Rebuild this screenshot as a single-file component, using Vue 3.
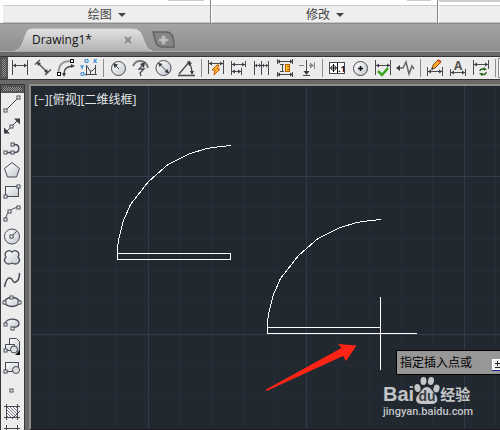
<script setup>
const sq = (x, y) => `<rect x="${x - 1.5}" y="${y - 1.5}" width="3" height="3" fill="#fff"/>`
const dot = 'fill="#3c3c44" stroke="none"'

const dimensionGroups = [
  [
    { name: 'Linear', art: `<path d="M4.500 3v15M19.500 3v15M5 8.500h14"/><path ${dot} d="M5 8.500l3-2v4zM19 8.500l-3-2v4z"/>` },
    { name: 'Aligned', art: `<path stroke-width="1.300" d="M4 7.500l5-4.500M14 18l6-5.500M7 6l9 9"/><path ${dot} d="M6 5l4 1-3 3zM17 16l-4-1 3-3z"/>` },
    { name: 'Arc length', art: `<path stroke="#999" stroke-width="2" d="M4.500 16c0-8 4-12 12-12"/><path stroke-width="1.500" d="M10 17c0-5 2-7 8-8"/><path ${dot} d="M8 16h4l-2 4zM17 7v4l4-2z"/><rect x="3.500" y="15.500" width="3" height="3" fill="#fff" stroke="#111"/><rect x="16.500" y="2.500" width="3" height="3" fill="#fff" stroke="#111"/>` },
    { name: 'Ordinate', art: `<path d="M9.500 8v10.500M8 17.500h12M10 9l3 5h2l3-3M13.500 14v4M18.500 8v10"/><g fill="#0878d0" stroke="none" font-size="6" font-weight="700"><text x="7" y="6">O</text><text x="16" y="6">X</text><text x="3" y="12">Y</text><text x="3" y="19">O</text></g>` }
  ],
  [
    { name: 'Radius', art: `<circle cx="12.500" cy="11.500" r="7" fill="url(#steel)"/><path d="M8 7l5 5"/><path ${dot} d="M7 6l5 1.500L8.500 11z"/>` },
    { name: 'Jogged radius', art: `<path stroke="#777" stroke-width="2" d="M4 9c3-7 13-7 15 2"/><path stroke-width="1.300" d="M14 8l-4 4 5 0-4 4 1 3"/><path ${dot} d="M16 5l-1 6-4-4z"/>` },
    { name: 'Diameter', art: `<circle cx="11.500" cy="11" r="7.500" fill="url(#steel)"/><path d="M7 6.500l9 9"/><path ${dot} d="M6 5.500l4.500 1.500L7.500 10zM17 16.500l-4.500-1.500 3-3z"/>` },
    { name: 'Angular', art: `<path stroke-width="1.300" d="M3 18.500h17M4 17L15 4M14 6c3 4 3 7 3 11"/><path ${dot} d="M12 4l5 2-3 3zM17 18l-2-4h4z"/>` }
  ],
  [
    { name: 'Quick', art: `<path d="M4.500 3v14M19.500 3v14M5 6.500h14"/><path ${dot} d="M5 6.500l3-2v4zM19 6.500l-3-2v4z"/><path stroke="#d05b00" fill="#ffb62e" d="M13 8l-5 5h3l-1 5 6-6h-3l2-4z"/>` },
    { name: 'Baseline', art: `<path d="M4.500 4v14M18.500 4v6M14.500 11v7M5 7.500h13M5 14.500h9"/><path ${dot} d="M5 7.500l3-2v4zM18 7.500l-3-2v4zM5 14.500l3-2v4zM14 14.500l-3-2v4z"/>` },
    { name: 'Continue', art: `<path d="M4.500 4v14M11.500 4v14M18.500 4v14M5 8.500h13"/><path ${dot} d="M5 8.500l2-2v4zM11 8.500l-2-2v4zM12 8.500l2-2v4zM18 8.500l-2-2v4z"/>` },
    { name: 'Dimension space', art: `<path d="M4.500 2v5M19.500 2v5M4 4.500h15M4.500 15v5M19.500 15v5M4 17.500h15M7 7.500h4M9.500 8v7M7 14.500h4"/><path ${dot} d="M4 4.500l3-2v4zM20 4.500l-3-2v4zM4 17.500l3-2v4zM20 17.500l-3-2v4z"/><rect x="12.500" y="7.500" width="4" height="7" fill="#ffc928" stroke="#b45b00"/><path stroke="#b45b00" d="M14 9.500h2M14 12.500h2"/>` },
    { name: 'Dimension break', art: `<path stroke="#888" d="M3 8.500h5M13 8.500h5M18.500 5v7"/><path fill="#888" stroke="none" d="M18 8.500l-4-3v6z"/><path d="M10.500 3v13M7 18.500h7"/><path ${dot} d="M10.500 18l-3-4h6z"/>` }
  ],
  [
    { name: 'Tolerance', art: `<rect x="4.500" y="5.500" width="15" height="11" fill="#fff"/><circle cx="8.500" cy="11" r="2.500"/><path stroke="#111" d="M5 11h7M8.500 7v8M12.500 6v10"/><text x="13" y="15" font-size="9" font-weight="700" fill="#111" stroke="none">.1</text>` },
    { name: 'Center mark', art: `<circle cx="12.500" cy="11.500" r="7" fill="url(#steel)"/><path stroke="#111" stroke-width="1.500" d="M10 11.500h5M12.500 9v5"/>` },
    { name: 'Inspection', art: `<path d="M4.500 3v15M19.500 3v15M5 8.500h14"/><path ${dot} d="M5 8.500l3-2v4zM19 8.500l-3-2v4z"/><path stroke="#38a51c" stroke-width="2.500" d="M7 14l4 4 6-7"/>` },
    { name: 'Jogged linear', art: `<path stroke="#666" stroke-width="1.500" d="M4 11h5l3-6 3 12 3-8 2 3"/><path ${dot} d="M2 11l4-3v6z"/>` }
  ],
  [
    { name: 'Edit', art: `<path d="M4.500 10v9M19.500 10v9M5 14.500h14"/><path ${dot} d="M5 14.500l3-2v4zM19 14.500l-3-2v4z"/><path fill="#f9a72d" stroke="#8b4a12" d="M9 12l1-4 5-5 3 2-6 6z"/><path stroke="#d83c20" stroke-width="2" d="M15 3l3 2"/><path ${dot} d="M8 13l1-3 2 2z"/>` },
    { name: 'Text edit', art: `<path d="M4.500 12v7M19.500 12v7M5 15.500h14"/><path ${dot} d="M5 15.500l3-2v4zM19 15.500l-3-2v4z"/><text x="8" y="13" font-size="12" font-weight="700" fill="#555" stroke="none">A</text>` },
    { name: 'Update', art: `<path d="M4.500 3v15M19.500 3v9M5 7.500h14"/><path ${dot} d="M5 7.500l3-2v4zM19 7.500l-3-2v4z"/><path stroke="#286818" stroke-width="1.500" d="M11 14c0-2 3-3 5-1M17 15c0 3-3 3-5 2"/><path fill="#286818" stroke="none" d="M15 10l3 3h-4zM13 19l-3-3h4z"/>` }
  ]
]

const drawTools = [
  { name: 'Line', art: `<path d="M4.500 17.500l13-13"/>${sq(4.5, 17.5)}${sq(17.5, 4.5)}` },
  { name: 'Construction line', art: `<path d="M5 17L17 5"/><path ${dot} d="M3 18.500v-6l6 6zM19 3.500v6l-6-6z"/>${sq(10.5, 11.5)}` },
  { name: 'Polyline', art: `<path stroke-width="1.500" d="M4 15.500h10c5 0 5-8 0-8h-3"/>${sq(4.5, 15.5)}${sq(11.5, 15.5)}${sq(11.5, 7.5)}` },
  { name: 'Polygon', art: `<path fill="url(#steel)" d="M11 3.500l7.500 6-3 8.500h-9l-3-8.500z"/>` },
  { name: 'Rectangle', art: `<rect x="4.500" y="5.500" width="13" height="10" fill="url(#steel)"/>${sq(4.5, 15.5)}${sq(17.5, 5.5)}` },
  { name: 'Arc', art: `<path d="M4.500 16.500c1-7 6-12 13-12"/>${sq(4.5, 16.5)}${sq(8.5, 8.5)}${sq(17.5, 4.5)}` },
  { name: 'Circle', art: `<circle cx="11" cy="11.500" r="7.500" fill="url(#steel)"/><path d="M10.500 11.500l5-5"/>${sq(10.5, 11.5)}` },
  { name: 'Revision cloud', art: `<path fill="url(#steel)" stroke-width="1.300" d="M11 5c3-3 9 0 6 5 4 4-1 9-6 6-5 3-10-2-6-6-3-5 3-8 6-5z"/>` },
  { name: 'Spline', art: `<path stroke-width="1.500" d="M3.500 18c1-5 2-9 5-9 4 0 3 6 6 4 3-1 4-5 4-9"/>` },
  { name: 'Ellipse', art: `<ellipse cx="11" cy="11" rx="7.500" ry="4.500" fill="url(#steel)" stroke-width="1.300"/>${sq(3.5, 11.5)}${sq(18.5, 11.5)}${sq(10.5, 6.5)}` },
  { name: 'Ellipse arc', art: `<path fill="url(#steel)" stroke-width="1.300" d="M4 11.500c0-7 14-7 14-1 0 3-4 4-7 4"/>${sq(4.5, 11.5)}${sq(11.5, 15.5)}` },
  { name: 'Insert block', art: `<path fill="url(#steel)" d="M8.500 9V3.500h7l3 3V16h-5"/><path fill="url(#steel)" d="M4.500 9.500h9v6h-9z"/><circle cx="13" cy="14.500" r="3.500" fill="#ddd"/>${sq(4.5, 15.5)}<path fill="#111" stroke="none" d="M19 15v5h-5z"/>` },
  { name: 'Make block', art: `<rect x="4.500" y="5.500" width="13" height="9" fill="url(#steel)"/><circle cx="15" cy="13" r="3.500" fill="#ddd"/>${sq(4.5, 14.5)}` },
  { name: 'Point', art: sq(10.5, 11.5) },
  { name: 'Hatch', art: `<rect x="6" y="6" width="10" height="11" fill="url(#stripes)" stroke="none"/><path d="M3 5.500h16M3 16.500h16M5.500 3v16M16.500 3v16"/><path d="M11 18l8-8"/>` },
  { name: 'Gradient', art: `<path d="M3 5.500h16M5.500 2v16M16.500 2v16"/>` }
]

const panels = [
  { title: '绘图', cls: 'draw' },
  { title: '修改', cls: 'modify' },
  { title: '', cls: 'rest' }
]

const pitch = 31.6
const lines = (first, majorAt, count) =>
  Array.from({ length: count }, (_, i) => ({ at: Math.round(first + i * pitch), major: i % 5 === majorAt }))
const columns = lines(22, 3, 60)
const rows = lines(26.5, 2, 40)
</script>

<template>
  <div class="app">
    <svg class="defs" aria-hidden="true">
      <defs>
        <linearGradient id="steel" x1="0" y1="0" x2="1" y2="1">
          <stop offset="0" stop-color="#ffffff" />
          <stop offset="1" stop-color="#c4c9cf" />
        </linearGradient>
        <pattern id="stripes" width="3" height="3" patternUnits="userSpaceOnUse">
          <rect width="3" height="3" fill="#f4f4f4" />
          <path d="M0 0l3 3M-1 2l2 2M2 -1l2 2" stroke="#777c86" />
        </pattern>
      </defs>
    </svg>

    <header class="ribbon">
      <section v-for="p in panels" :key="p.cls" class="panel" :class="p.cls">
        <div class="panel-body"><i class="stub"></i></div>
        <button class="panel-title" type="button" :aria-label="p.title || 'Panel'">
          <span>{{ p.title }}</span>
          <i v-if="p.title" class="caret"></i>
        </button>
      </section>
    </header>

    <nav class="tabs">
      <div class="tab">
        <svg class="tab-shape" viewBox="0 0 137 24" preserveAspectRatio="none" aria-hidden="true">
          <defs>
            <linearGradient id="tabfill" x1="0" y1="0" x2="0" y2="1">
              <stop offset="0" stop-color="#e2e2e2" />
              <stop offset="1" stop-color="#b3b3b3" />
            </linearGradient>
          </defs>
          <path d="M0 24C6 22 7 18 9 12C12 3 12 1 18 1H117C125 1 126 5 128 11C131 19 131 22 137 24Z" fill="url(#tabfill)" />
          <path d="M0 24C6 22 7 18 9 12C12 3 12 1 18 1H117C125 1 126 5 128 11C131 19 131 22 137 24" fill="none" stroke="#d4d4d4" />
        </svg>
        <a class="tab-name" href="#">Drawing1*</a>
        <button class="close" type="button" aria-label="Close">
          <svg width="8" height="8" viewBox="0 0 8 8"><path d="M1 1l6 6M7 1l-6 6" stroke="#8b8b8b" stroke-width="2" /></svg>
        </button>
      </div>
      <button class="new-tab" type="button" aria-label="New drawing">
        <svg width="24" height="18" viewBox="0 0 24 18">
          <path d="M1 1h14c6 1 7 6 7 15H9C3 15 3 7 1 1z" fill="#858585" stroke="#626262" stroke-width="1.500" />
          <path d="M10 5h3v3h3v2h-3v3h-3v-3H7V8h3z" fill="#c4c4c4" stroke="#ababab" />
        </svg>
      </button>
    </nav>

    <div class="toolbar-row">
      <div class="toolbar">
        <i class="grip"></i>
        <div v-for="(group, g) in dimensionGroups" :key="g" class="group">
          <button v-for="t in group" :key="t.name" class="tool" type="button" :aria-label="t.name">
            <svg width="23" height="22" viewBox="0 0 23 22" fill="none" stroke="#4a4a50" v-html="t.art"></svg>
          </button>
          <i class="sep"></i>
        </div>
        <i class="style-box"></i>
      </div>
    </div>

    <main class="work">
      <aside class="palette">
        <i class="grip flat"></i>
        <button v-for="t in drawTools" :key="t.name" class="tool" type="button" :aria-label="t.name">
          <svg width="23" height="22" viewBox="0 0 23 22" fill="none" stroke="#454a55" v-html="t.art"></svg>
        </button>
      </aside>

      <section class="canvas">
        <svg class="drawing" aria-hidden="true">
          <g shape-rendering="crispEdges">
            <rect v-for="c in columns" :key="'c' + c.at" :x="c.at" y="0" width="1" height="100%" :fill="c.major ? '#343a4d' : '#262c38'" />
            <rect v-for="r in rows" :key="'r' + r.at" x="0" :y="r.at" width="100%" height="1" :fill="r.major ? '#343a4d' : '#262c38'" />
          </g>
          <g fill="none" stroke="#fff" shape-rendering="crispEdges">
            <path d="M200 59.500L182 61.500L176 62.500L159 67.500L137 78.500L117.500 95.500L99.500 118.500L92.500 134.500L88.500 149.500L86.500 160.500V173.500H199.500V167.500H86.500" />
            <path d="M350 133.500L332 135.500L326 136.500L309 141.500L287 152.500L267.500 169.500L249.500 192.500L242.500 208.500L238.500 223.500L236.500 234.500V247.500H386M236.500 241.500H349M349.500 211V284" />
          </g>
          <path d="M325.500 259.500L307 258L310.500 262L235 303.500L235.500 305L312 270L315 275Z" fill="#ff2416" />
        </svg>

        <p class="view-label">[−][俯视][二维线框]</p>

        <div class="prompt">
          <span>指定插入点或</span>
          <svg class="key" width="12" height="12" viewBox="0 0 12 12" aria-hidden="true">
            <rect x="0.500" y="0.500" width="11" height="10" fill="#eee" stroke="#fff" />
            <path d="M5.500 2v5M3 4.500h5M3 8.500h5" stroke="#222" />
            <path d="M0 11.500h12" stroke="#1c1c9c" />
          </svg>
        </div>

        <div class="watermark">
          <div class="brand">
            <span class="bai">Bai</span>
            <span class="paw">
              <svg width="26" height="28" viewBox="0 0 26 28" fill="#c3c5c7" aria-hidden="true">
                <ellipse cx="3.500" cy="12" rx="3" ry="4" transform="rotate(-12 3.500 12)" />
                <ellipse cx="9.500" cy="5" rx="3" ry="4" />
                <ellipse cx="17" cy="5" rx="3" ry="4" transform="rotate(12 17 5)" />
                <ellipse cx="22.500" cy="12.500" rx="3" ry="4" transform="rotate(15 22.500 12.500)" />
                <path d="M13 11c4 0 5 4 8 7s4 10-3 10H8c-7 0-7-6-4-9s5-8 9-8z" />
              </svg>
              <span class="du">du</span>
            </span>
            <span class="exp">经验</span>
          </div>
          <div class="site">jingyan.baidu.com</div>
        </div>
      </section>
    </main>
  </div>
</template>

<style>
body {
  margin: 0;
}
</style>

<style scoped>
.app {
  display: flex;
  flex-direction: column;
  height: 100vh;
  overflow: hidden;
  background: #696969;
  font-family: "Open Sans", "Noto Sans CJK SC", sans-serif;
  font-size: 12px;
}
.app * {
  box-sizing: border-box;
}
button {
  margin: 0;
  padding: 0;
  border: 0;
  background: none;
  font: inherit;
  color: inherit;
}
svg {
  display: block;
}
.defs {
  position: absolute;
  width: 0;
  height: 0;
}
.ribbon {
  flex: none;
  display: flex;
  height: 24px;
  padding-left: 3px;
  background: #fff;
  border-bottom: 1px solid #8a8a8a;
}
.panel {
  display: flex;
  flex-direction: column;
}
.panel.draw {
  flex: 209 0 0;
  border-right: 1px solid #858585;
}
.panel.modify {
  flex: 227 0 0;
  padding-left: 1px;
  border-right: 1px solid #858585;
}
.panel.rest {
  flex: 61 0 0;
  padding-left: 1px;
}
.panel-body {
  display: flex;
  justify-content: flex-end;
  height: 5px;
  padding-right: 6px;
}
.stub {
  width: 36px;
  height: 1px;
  background: #ccc;
}
.modify .stub {
  width: 24px;
}
.rest .panel-body {
  padding-right: 0;
}
.rest .stub {
  width: 100%;
  height: 2px;
}
.panel-title {
  display: flex;
  align-items: center;
  justify-content: center;
  gap: 6px;
  height: 18px;
  padding-top: 1px;
  border-top: 1px solid #ccc;
  border-bottom: 1px solid #c4c4c4;
  background: #eee;
  color: #444;
  line-height: 16px;
}
.caret {
  border: 4px solid transparent;
  border-top-color: #444;
  border-bottom: 0;
}
.tabs {
  flex: none;
  display: flex;
  height: 28px;
  padding: 4px 0 0 15px;
  background: linear-gradient(#a4a4a4, #8f8f8f);
  border-bottom: 1px solid #a8a8a8;
}
.tab {
  position: relative;
  display: flex;
  align-items: center;
  justify-content: space-between;
  width: 137px;
  padding: 0 20px 0 17px;
}
.tab-shape {
  position: absolute;
  inset: 0;
  width: 100%;
  height: 100%;
}
.tab-name {
  position: relative;
  color: #111;
  text-decoration: none;
}
.close {
  position: relative;
}
.new-tab {
  align-self: flex-start;
  padding-top: 3px;
}
.toolbar-row {
  flex: none;
  padding: 4px 0;
}
.toolbar {
  display: flex;
  height: 24px;
  border: 1px solid #333;
  border-width: 1px 0;
  background: #ececec;
  overflow: hidden;
}
.grip {
  flex: none;
  width: 8px;
  border: 2px solid #555;
  background: repeating-conic-gradient(#999 0 25%, #444 0 50%) 0 0 / 2px 2px;
}
.group {
  flex: none;
  display: flex;
}
.tool {
  flex: none;
  width: 23px;
  height: 22px;
}
.sep {
  width: 6px;
  background: linear-gradient(#8c8c8c, #8c8c8c) center / 1px 18px no-repeat;
}
.style-box {
  flex: 1;
  margin: 1px 0;
  border: 1px solid #888;
  border-right: 0;
  background: #fff;
}
.work {
  flex: 1;
  display: flex;
  gap: 4px;
  min-height: 0;
}
.palette {
  flex: none;
  display: flex;
  flex-direction: column;
  width: 25px;
  border: 1px solid #383838;
  border-bottom: 0;
  background: #ececed;
  overflow: hidden;
}
.grip.flat {
  width: 100%;
  height: 8px;
}
.canvas {
  flex: 1;
  position: relative;
  border-top: 2px solid #8c8c88;
  border-left: 2px solid #8c8c88;
  border-bottom: 1px solid #1c1824;
  background: #212830;
  overflow: hidden;
}
.drawing {
  position: absolute;
  inset: 0;
  width: 100%;
  height: 100%;
}
.view-label {
  position: relative;
  margin: 5px 0 0 3px;
  color: #e4e6e8;
  line-height: 18px;
}
.prompt {
  position: absolute;
  left: 365px;
  top: 264px;
  display: flex;
  align-items: center;
  justify-content: space-between;
  width: 112px;
  height: 25px;
  padding: 0 3px;
  border: 1px solid #000;
  background: #979797;
  color: #000;
  line-height: 18px;
}
.key {
  align-self: flex-end;
  margin-bottom: 3px;
}
.watermark {
  position: absolute;
  left: 352px;
  top: 290px;
  color: #c3c5c7;
  white-space: nowrap;
}
.brand {
  display: flex;
  align-items: flex-end;
  height: 28px;
}
.bai {
  font: 700 20px/20px "Liberation Sans", sans-serif;
}
.paw {
  position: relative;
}
.du {
  position: absolute;
  left: 0;
  right: 0;
  bottom: 1px;
  color: #3a4047;
  font: 700 14px/14px "Liberation Sans", sans-serif;
  text-align: center;
}
.exp {
  font: 700 15px/20px "Noto Sans CJK SC", sans-serif;
}
.site {
  font: 500 11px/16px Roboto, sans-serif;
}
</style>
